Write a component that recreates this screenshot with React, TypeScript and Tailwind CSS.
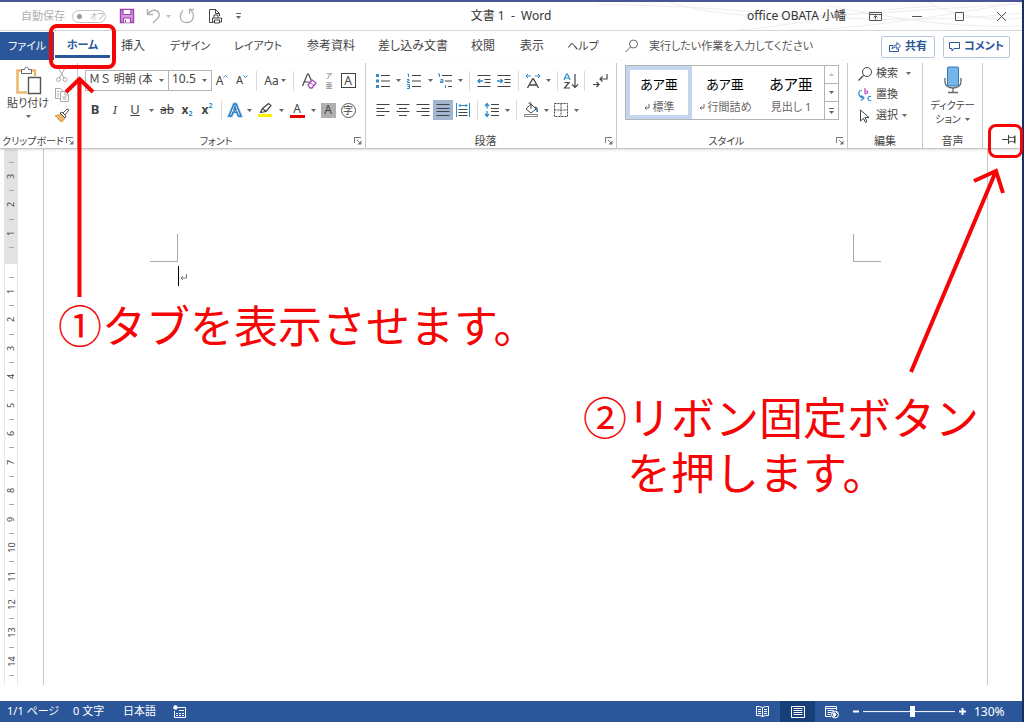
import React, { useState } from 'react';

interface IconProps {
    children: React.ReactNode;
    className?: string;
    size?: number;
}

const Icon: React.FC<IconProps> = ({ children, className = '', size = 16 }) => (
    <svg
        width={size}
        height={size}
        viewBox={`0 0 ${size} ${size}`}
        fill="none"
        stroke="currentColor"
        className={`shrink-0 ${className}`}
        aria-hidden="true"
    >
        {children}
    </svg>
);

const Caret = ({ className = '' }: { className?: string }) => (
    <svg width="5" height="3" viewBox="0 0 5 3" className={`shrink-0 fill-[#666] ${className}`} aria-hidden="true">
        <path d="M0 0h5L2.5 3z" />
    </svg>
);

interface ToolProps {
    label: string;
    width?: string;
    className?: string;
    children: React.ReactNode;
}

const Tool: React.FC<ToolProps> = ({ label, width = 'w-5', className = '', children }) => (
    <button
        type="button"
        aria-label={label}
        className={`flex h-5 shrink-0 items-center justify-center hover:bg-gray-200 ${width} ${className}`}
    >
        {children}
    </button>
);

const Drop = ({ label, width = 'w-[10px]' }: { label: string; width?: string }) => (
    <Tool label={label} width={width}>
        <Caret />
    </Tool>
);

const Sep = () => <span className="mx-1 h-5 w-px shrink-0 bg-[#dcdcdc]" />;

interface GroupProps {
    title: string;
    width: string;
    titleSize?: string;
    launcher?: boolean;
    children: React.ReactNode;
}

const Group: React.FC<GroupProps> = ({ title, width, titleSize = 'text-[11px]', launcher = false, children }) => (
    <section className={`mt-[3px] flex shrink-0 flex-col border-r border-[#c8c8c8] ${width}`}>
        <div className="h-[71px]">{children}</div>
        <div className="flex h-[14px] items-center">
            <h2 className={`flex-1 text-center leading-[14px] whitespace-nowrap ${titleSize}`}>{title}</h2>
            {launcher && (
                <button type="button" aria-label={`${title}の設定`} className="mr-[3px] w-2 text-[#777]">
                    <Icon size={8}>
                        <path d="M.5 6V.5H7M3 3l3 3" />
                        <path d="M7.5 3.5v4h-4z" fill="currentColor" stroke="none" />
                    </Icon>
                </button>
            )}
        </div>
    </section>
);

const tabs = [
    { label: '挿入', width: 'w-11', size: 'text-xs' },
    { label: 'デザイン', width: 'w-[70px]', size: 'text-[11px]' },
    { label: 'レイアウト', width: 'w-[66px]', size: 'text-[11px]' },
    { label: '参考資料', width: 'w-20', size: 'text-xs' },
    { label: '差し込み文書', width: 'w-[84px]', size: 'text-xs' },
    { label: '校閲', width: 'w-14', size: 'text-xs' },
    { label: '表示', width: 'w-[42px]', size: 'text-xs' },
    { label: 'ヘルプ', width: 'w-[60px]', size: 'text-[11px]' },
];

const TitleBar = () => (
    <header className="relative grid h-[31px] grid-cols-[1fr_auto_1fr] items-center overflow-hidden border-t-2 border-b border-t-[#4a5596] border-b-[#d6d6d6]">
        <svg className="absolute top-0 right-0 h-7 w-[424px]" viewBox="0 0 424 28" fill="none" stroke="#eeecf1" aria-hidden="true">
            <path d="M0 3c80 0 120 4 170 8s140 12 254 0M70 0c40 12 90 18 190 12s120-8 164-10M140 28c60-4 110-20 200-24M190 28c60 0 130-10 234-28M230 4c60 10 110 22 194 20M330 0c20 12 60 20 94 16" />
        </svg>
        <div className="flex items-center pl-[21px] text-[#b0b0b0]">
            <span className="w-[51px] text-[11px]">自動保存</span>
            <label className="flex h-[13px] w-[34px] items-center gap-2 rounded-full border border-[#c4c4c4] px-1 text-[8px] whitespace-nowrap">
                <input type="checkbox" aria-label="自動保存" className="size-[5px] shrink-0 appearance-none rounded-full bg-[#9a9a9a]" />
                オフ
            </label>
            <button type="button" aria-label="上書き保存" className="ml-[13px] text-[#9b3fae]">
                <Icon>
                    <path d="M1.5 1.5h13v13h-13z" fill="#d99be0" strokeWidth="1.4" />
                    <path d="M4 1.5h8v5H4zM4.5 14.5V10h7v4.5" fill="#fff" strokeWidth="1.2" />
                    <path d="M6.5 12v2" />
                </Icon>
            </button>
            <button type="button" aria-label="元に戻す" className="ml-[10px]">
                <Icon>
                    <path d="M2.5 1v5.500H8M2.500 6.500C5 3 8 1.500 11 2.500c4 1.500 4 5.500 2 7.500l-5 5" strokeWidth="1.400" />
                </Icon>
            </button>
            <Caret className="ml-[5px] opacity-40" />
            <button type="button" aria-label="やり直し" className="ml-2">
                <Icon>
                    <path d="M10.500 6V1.500H15M10.500 2C16 4 16 14 8 14.500S0 6 4 2.500" strokeWidth="1.300" />
                </Icon>
            </button>
            <button type="button" aria-label="印刷プレビュー" className="ml-[13px] text-[#444]">
                <Icon>
                    <path d="M5 14.500H1.500v-13h6l4 4V8M7.500 1.500v4h4M6 10V7h4v3M4.500 10h9v4h-9z" />
                    <path d="M6.500 12h5v3h-5z" fill="#fff" />
                </Icon>
            </button>
            <button type="button" aria-label="クイック アクセス ツール バーのカスタマイズ" className="ml-3 flex flex-col items-center gap-[2px]">
                <span className="h-px w-[5px] bg-[#666]" />
                <Caret />
            </button>
        </div>
        <h1 className="relative text-xs whitespace-pre text-[#333]">文書 1  -  Word</h1>
        <div className="relative flex items-center justify-end text-[#555]">
            <span className="mr-2 text-xs whitespace-nowrap text-[#333]">office OBATA 小幡</span>
            <button type="button" aria-label="リボンの表示オプション" className="flex w-[42px] justify-center">
                <Icon size={13}>
                    <path d="M.5 2.500h12v8H.5zM.5 4.500h12M6.500 9.500V6M4.500 7.500l2-2 2 2" />
                </Icon>
            </button>
            <button type="button" aria-label="最小化" className="flex w-[42px] justify-center">
                <Icon size={11}><path d="M0 5.500h10" /></Icon>
            </button>
            <button type="button" aria-label="最大化" className="flex w-[42px] justify-center">
                <Icon size={11}><path d="M1.500 1.500h8v8h-8z" /></Icon>
            </button>
            <button type="button" aria-label="閉じる" className="flex w-[42px] justify-center">
                <Icon size={11}><path d="m1 1 9 9M10 1l-9 9" /></Icon>
            </button>
        </div>
    </header>
);

const TabBar = () => (
    <nav className="flex h-[29px] items-stretch pt-px">
        <button type="button" className="w-[54px] shrink-0 bg-[#2b579a] text-[11px] text-white">ファイル</button>
        <button type="button" className="flex w-[57px] shrink-0 flex-col items-center pt-1 text-[11px] font-bold text-[#2b579a]">
            <span className="flex flex-1 items-center">ホーム</span>
            <span className="mb-[2px] h-[3px] w-[55px] bg-[#2b579a]" />
        </button>
        {tabs.map((tab) => (
            <button key={tab.label} type="button" className={`shrink-0 whitespace-nowrap ${tab.width} ${tab.size}`}>
                {tab.label}
            </button>
        ))}
        <label className="flex flex-1 items-center gap-[10px] pl-3">
            <Icon size={14} className="text-[#666]">
                <circle cx="8.500" cy="5" r="4" />
                <path d="m5.500 8-5 5" />
            </Icon>
            <input
                type="text"
                placeholder="実行したい作業を入力してください"
                className="w-full min-w-0 text-[11px] outline-none placeholder:text-[#555]"
            />
        </label>
        <div className="mr-3 flex items-center gap-2 pt-px text-[11px] font-bold text-[#2b579a]">
            <button type="button" className="flex h-[22px] w-[54px] items-center justify-center gap-1 rounded-xs border border-[#b9c7de] bg-white">
                <Icon size={12}>
                    <path d="M4 4.500H.5v6h9V8M3 8c.5-3 2-4 5-4V1.500L11.500 5 8 8.500V6C6 6 4.500 6.500 3 8z" />
                </Icon>
                共有
            </button>
            <button type="button" className="flex h-[22px] w-[67px] items-center justify-center gap-1 rounded-xs border border-[#b9c7de] bg-white">
                <Icon size={11}>
                    <path d="M.5 1.500h10v6H5l-2 2.500V7.500H.5z" />
                </Icon>
                コメント
            </button>
        </div>
    </nav>
);

const ClipboardGroup = () => (
    <Group title="クリップボード" titleSize="text-[10px]" width="w-[78px]" launcher>
        <div className="flex">
            <button type="button" className="ml-1 flex w-12 flex-col items-center pt-[3px] text-[11px] leading-4">
                <svg width="28" height="29" viewBox="0 0 28 29" fill="none" aria-hidden="true">
                    <path d="M13 26.500H3.500v-22h4M17 4.500h4V10" stroke="#eab96c" strokeWidth="2.500" />
                    <path d="M7.500 7.500v-4h3c0-3 4-3 4 0h3v4z" fill="#fff" stroke="#666" />
                    <path d="M14.500 11.500h12v16h-12z" fill="#fff" stroke="#555" strokeWidth="1.400" />
                </svg>
                <span>貼り付け</span>
                <Caret className="mt-1" />
            </button>
            <div className="flex flex-col pt-[2px] text-[#a9a9a9]">
                <Tool label="切り取り">
                    <Icon>
                        <path d="M4.500 1 10 11M11 1 5.500 11" />
                        <circle cx="4.500" cy="12.500" r="2" />
                        <circle cx="11" cy="12.500" r="2" />
                    </Icon>
                </Tool>
                <Tool label="コピー">
                    <Icon>
                        <path d="M6 11.500H1.500v-10h5l2 2V5M3 4.500h2M3 7h2M3 9h2" />
                        <path d="M6.500 4.500h5l3 3v7h-8zM11 5v3h3M8.500 10h4M8.500 12h4" />
                    </Icon>
                </Tool>
                <Tool label="書式のコピー/貼り付け">
                    <Icon>
                        <path d="m1 9 6-2 4 4-3 4-2-1-1-1-1-1-1-2z" fill="#f0b66b" stroke="#dc9b49" />
                        <path d="m6 6 5 5 1-2-4-4z" fill="#fff" stroke="#555" />
                        <path d="m9 6 4-4 2 1-4 5" stroke="#555" />
                    </Icon>
                </Tool>
            </div>
        </div>
    </Group>
);

const FontGroup = () => (
    <Group title="フォント" titleSize="text-[10px]" width="w-72" launcher>
        <div className="flex flex-col gap-[9px] pt-[7px] pl-[7px]">
            <div className="flex items-center">
                <div className="relative h-[21px] w-[84px] border border-[#b4b4b4]">
                    <select
                        aria-label="フォント"
                        className="block h-[19px] w-full appearance-none py-0 pr-4 pb-1 pl-[3px] text-[11px] leading-[15px] [font-feature-settings:normal]"
                    >
                        <option>ＭＳ 明朝 (本</option>
                    </select>
                    <Caret className="absolute top-2 right-1" />
                </div>
                <div className="relative -ml-px h-[21px] w-11 border border-[#b4b4b4]">
                    <select
                        aria-label="フォント サイズ"
                        className="block h-[19px] w-full appearance-none py-0 pb-1 pl-[3px] text-xs leading-[15px]"
                    >
                        <option>10.5</option>
                    </select>
                    <Caret className="absolute top-2 right-1" />
                </div>
                <Tool label="フォント サイズの拡大">
                    <span className="text-xs">A</span>
                    <Icon size={5} className="-mt-2 text-[#2f8ac9]"><path d="m.5 3.500 2-2 2 2" /></Icon>
                </Tool>
                <Tool label="フォント サイズの縮小">
                    <span className="text-[11px]">A</span>
                    <Icon size={5} className="-mt-2 text-[#2f8ac9]"><path d="m.5 1.500 2 2 2-2" /></Icon>
                </Tool>
                <Sep />
                <Tool label="文字種の変換" width="w-7" className="gap-[2px] text-xs">
                    Aa
                    <Caret />
                </Tool>
                <Sep />
                <Tool label="書式のクリア" width="w-[22px]">
                    <Icon>
                        <path d="m1.500 13 5-12h1l4 9M3.500 9h5" strokeWidth="1.200" />
                        <path d="m7 12 4-5 4 3-4 5H9z" fill="#fff" stroke="#a349b5" strokeWidth="1.300" />
                        <path d="m9 9.500 4 3" stroke="#a349b5" />
                    </Icon>
                </Tool>
                <Tool label="ルビ" width="w-[18px]">
                    <span className="flex flex-col items-center text-[7px] leading-[10px] text-[#777]">
                        <span>ア</span>
                        <span>亜</span>
                    </span>
                </Tool>
                <Tool label="囲み線">
                    <span className="flex size-[15px] items-center justify-center border border-[#444] text-xs">A</span>
                </Tool>
            </div>
            <div className="flex items-center">
                <Tool label="太字" className="text-[13px] font-bold">B</Tool>
                <Tool label="斜体" className="font-serif text-[13px] italic">I</Tool>
                <Tool label="下線" className="text-[13px] underline">U</Tool>
                <Drop label="下線の種類" width="w-3" />
                <Tool label="取り消し線" className="text-xs line-through">ab</Tool>
                <Tool label="下付き" className="text-xs font-bold">
                    x<span className="mt-2 text-[7px] text-[#2f8ac9]">2</span>
                </Tool>
                <Tool label="上付き" className="text-xs font-bold">
                    x<span className="mb-2 text-[7px] text-[#2f8ac9]">2</span>
                </Tool>
                <Sep />
                <Tool label="文字の効果と体裁" width="w-[18px]">
                    <Icon>
                        <path d="M2 14 7 2h2l5 12h-2.500l-1.500-4H6l-1.500 4z" fill="#fff" stroke="#a7d0f0" strokeWidth="3" />
                        <path d="M2 14 7 2h2l5 12h-2.500l-1.500-4H6l-1.500 4zM7 8h2L8 4.500z" fill="#fff" stroke="#2878bd" strokeWidth="1.400" />
                    </Icon>
                </Tool>
                <Drop label="文字の効果" />
                <Tool label="蛍光ペンの色" width="w-[22px]">
                    <Icon>
                        <path d="m3.500 10.500 2-4 6-5 2.500 2-5 6zM5.500 6.500l3.500 3" strokeWidth="1.200" />
                        <path d="M1 12h14v3H1z" fill="#ffef00" stroke="none" />
                    </Icon>
                </Tool>
                <Drop label="蛍光ペン" />
                <Tool label="フォントの色" width="w-[22px]">
                    <span className="flex h-4 w-[15px] items-center justify-center border-b-3 border-[#e60000] text-xs">A</span>
                </Tool>
                <Drop label="フォントの色の選択" />
                <Tool label="文字の網かけ">
                    <span className="flex size-[15px] items-center justify-center bg-[#b0b0b0] text-xs">A</span>
                </Tool>
                <Tool label="囲い文字">
                    <span className="flex size-[15px] items-center justify-center rounded-full border border-[#555] text-[10px]">字</span>
                </Tool>
            </div>
        </div>
    </Group>
);

const ParagraphGroup = () => (
    <Group title="段落" width="w-[251px]" launcher>
        <div className="flex flex-col gap-[9px] pt-[7px] pl-[7px]">
            <div className="flex h-[21px] items-center">
                <Tool label="箇条書き">
                    <Icon>
                        <path d="M6 2.500h9M6 8h9M6 13.500h9" />
                        <path d="M1 1h3v3H1zM1 6.500h3v3H1zM1 12h3v3H1z" fill="#2f8ac9" stroke="none" />
                    </Icon>
                </Tool>
                <Drop label="箇条書きの種類" />
                <Tool label="段落番号" width="w-[22px]">
                    <Icon>
                        <path d="M6 2.500h9M6 8h9M6 13.500h9" />
                        <path d="M1.500 1h1v3M1 6.500h2v1.500H1.500v1.500H4M1 11.500h2.500v4H1M1.500 13.500h2" stroke="#2f8ac9" />
                    </Icon>
                </Tool>
                <Drop label="段落番号の種類" />
                <Tool label="アウトライン">
                    <Icon>
                        <path d="M5 2.500h10M8 8h7M11 13.500h4" />
                        <path d="M1 1h1.500v3M3.500 6.500h2.500v3H3.500V8H6M8.500 12v3" stroke="#2f8ac9" />
                    </Icon>
                </Tool>
                <Drop label="アウトラインの種類" />
                <Sep />
                <Tool label="インデントを減らす">
                    <Icon>
                        <path d="M1.500 2.500h13M8.500 6.500h6M8.500 9.500h6M1.500 13.500h13" />
                        <path d="M7 8H2M4 6 2 8l2 2" stroke="#2f8ac9" strokeWidth="1.300" />
                    </Icon>
                </Tool>
                <Tool label="インデントを増やす">
                    <Icon>
                        <path d="M1.500 2.500h13M8.500 6.500h6M8.500 9.500h6M1.500 13.500h13" />
                        <path d="M1 8h5.500M4.500 6l2 2-2 2" stroke="#2f8ac9" strokeWidth="1.300" />
                    </Icon>
                </Tool>
                <Sep />
                <Tool label="拡張書式">
                    <Icon>
                        <path d="m2.500 15 5-9h1l5 9M4.500 12h7" strokeWidth="1.300" />
                        <path d="M6 3H1M3 1 1 3l2 2M10 3h5M13 1l2 2-2 2" stroke="#2f8ac9" />
                    </Icon>
                </Tool>
                <Drop label="拡張書式の種類" />
                <Sep />
                <Tool label="並べ替え" width="w-[18px]">
                    <Icon>
                        <path d="M1 7 3.500 1h1L7 7M2 5h4" stroke="#2f8ac9" strokeWidth="1.200" />
                        <path d="M1.500 9.500H6L1.500 15H7M12 1v13.500M9 11.500l3 3 3-3" strokeWidth="1.200" />
                    </Icon>
                </Tool>
                <Sep />
                <Tool label="編集記号の表示/非表示" width="w-[22px]">
                    <Icon>
                        <path d="M15 1v5H8M10.500 3.500 8 6l2.500 2.500M1 11.500h6M4.500 9 7 11.500 4.500 14" strokeWidth="1.200" />
                    </Icon>
                </Tool>
            </div>
            <div className="flex items-center">
                <Tool label="左揃え">
                    <Icon><path d="M1.500 2.500h13M1.500 6.500h8M1.500 9.500h13M1.500 13.500h8" /></Icon>
                </Tool>
                <Tool label="中央揃え">
                    <Icon><path d="M1.500 2.500h13M4 6.500h8M1.500 9.500h13M4 13.500h8" /></Icon>
                </Tool>
                <Tool label="右揃え">
                    <Icon><path d="M1.500 2.500h13M6.500 6.500h8M1.500 9.500h13M6.500 13.500h8" /></Icon>
                </Tool>
                <Tool label="両端揃え" className="bg-[#a3b5d0]">
                    <Icon><path d="M1.500 2.500h13M1.500 6.500h13M1.500 9.500h13M1.500 13.500h13" /></Icon>
                </Tool>
                <Tool label="均等割り付け">
                    <Icon>
                        <path d="M3.500 7.500h9M3.500 10.500h9M3.500 13.500h9" />
                        <path d="M1.500 1v14M14.500 1v14M4 3.500h8M5.500 2 4 3.500 5.500 5M10.500 2 12 3.500 10.500 5" stroke="#2f8ac9" />
                    </Icon>
                </Tool>
                <Sep />
                <Tool label="行と段落の間隔">
                    <Icon>
                        <path d="M7 2.500h8M7 6.500h8M7 9.500h8M7 13.500h8" />
                        <path d="M3 1.500v5M1 4l2-2.500L5 4M3 9v5.500M1 12l2 2.500L5 12" stroke="#2f8ac9" strokeWidth="1.300" />
                    </Icon>
                </Tool>
                <Drop label="間隔の種類" />
                <Sep />
                <Tool label="塗りつぶし">
                    <Icon>
                        <path d="m3 7 5-5 5 5-5 4zM8 7V1.500C8 0 6 0 6 2" />
                        <path d="M12 5c2 1 2.500 3 2 5" stroke="#2f6fa9" strokeWidth="1.600" />
                        <path d="M1.500 12.500h13v2h-13z" fill="#fff" stroke="#888" />
                    </Icon>
                </Tool>
                <Drop label="塗りつぶしの色" />
                <Tool label="罫線">
                    <Icon>
                        <path d="M1.500 1.500h13v13h-13zM8 1.500v13M1.500 8h13" strokeDasharray="2 1" />
                    </Icon>
                </Tool>
                <Drop label="罫線の種類" />
            </div>
        </div>
    </Group>
);

const styleCells = [
    { name: '標準', mark: true, sample: 'text-[13px]', active: true },
    { name: '行間詰め', mark: true, sample: 'text-[13px]', active: false },
    { name: '見出し 1', mark: false, sample: 'text-[15px]', active: false },
];

const StylesGroup = () => (
    <Group title="スタイル" titleSize="text-[10px]" width="w-[231px]" launcher>
        <div className="pt-[2px] pl-2">
            <div className="flex h-[55px] w-[214px] border border-[#b4b4b4]">
                {styleCells.map((cell) => (
                    <button
                        key={cell.name}
                        type="button"
                        className={`flex flex-1 flex-col items-center justify-between border-4 pt-1 ${cell.active ? 'border-[#c5d5ee]' : 'border-transparent'}`}
                    >
                        <span className={`leading-5 text-black ${cell.sample}`}>あア亜</span>
                        <span className="flex items-center gap-[3px] text-[11px] leading-4 whitespace-nowrap text-[#666]">
                            {cell.mark && (
                                <Icon size={6}><path d="M5 0v4H1M2.500 2.500 1 4l1.500 1.500" /></Icon>
                            )}
                            {cell.name}
                        </span>
                    </button>
                ))}
                <div className="flex w-[14px] flex-col divide-y divide-[#b4b4b4] border-l border-[#b4b4b4]">
                    <button type="button" aria-label="前のスタイル" className="flex flex-1 items-center justify-center">
                        <Caret className="rotate-180 opacity-40" />
                    </button>
                    <button type="button" aria-label="次のスタイル" className="flex flex-1 items-center justify-center">
                        <Caret />
                    </button>
                    <button type="button" aria-label="その他のスタイル" className="flex flex-1 flex-col items-center justify-center gap-[2px]">
                        <span className="h-px w-[5px] bg-[#666]" />
                        <Caret />
                    </button>
                </div>
            </div>
        </div>
    </Group>
);

const EditGroup = () => (
    <Group title="編集" width="w-[75px]">
        <div className="flex flex-col pl-[10px] text-[11px]">
            <button type="button" className="flex h-[21px] items-center gap-1">
                <Icon size={14}>
                    <circle cx="9" cy="5" r="4.500" />
                    <path d="m5.500 8.500-5 5" strokeWidth="1.300" />
                </Icon>
                検索
                <Caret className="ml-1" />
            </button>
            <button type="button" className="flex h-[21px] items-center gap-1">
                <Icon size={14}>
                    <path d="M7 0v6M7 3.500c3-2 4 2.500 0 2.500" stroke="#b14fc0" strokeWidth="1.200" />
                    <path d="M13 8.500c-4-1-4 5 0 4M4 2C-1 3 0 9 6 10M3.500 7.500 6 10l-3 2.500" stroke="#2f8ac9" strokeWidth="1.200" />
                </Icon>
                置換
            </button>
            <button type="button" className="flex h-[21px] items-center gap-1">
                <Icon size={14}>
                    <path d="M2.500 1v11l3-2.500 2 4 1.500-1-2-4h4z" />
                </Icon>
                選択
                <Caret />
            </button>
        </div>
    </Group>
);

const VoiceGroup = () => (
    <Group title="音声" width="w-[60px]">
        <button type="button" className="flex w-full flex-col items-center pt-[3px] text-[10px] leading-[14px]">
            <svg width="18" height="28" viewBox="0 0 18 28" fill="none" aria-hidden="true">
                <path d="M1 12v4c0 8 16 8 16 0v-4M9 22v4M4 26.500h10" stroke="#666" strokeWidth="1.300" />
                <rect x="3.500" y="1" width="11" height="19" rx="1" fill="#76b5e8" stroke="#3477b5" />
            </svg>
            <span className="mt-1">ディクテー</span>
            <span className="flex items-center gap-1">
                ション
                <Caret />
            </span>
        </button>
    </Group>
);

const Ribbon = () => (
    <div className="relative z-10 flex h-[89px] border-b border-[#c6c6c6] bg-white shadow-sm">
        <ClipboardGroup />
        <FontGroup />
        <ParagraphGroup />
        <StylesGroup />
        <EditGroup />
        <VoiceGroup />
        <div className="flex flex-1 items-end justify-end pr-[5px]">
            <button type="button" aria-label="リボンの固定" className="block">
                <Icon className="block">
                    <path d="M1 7.500h6M7.500 3v9M7.500 4.500c2 1.500 4 1.500 6 0v6c-2-1.500-4-1.500-6 0M14 3.500v8" />
                </Icon>
            </button>
        </div>
    </div>
);

// null entries are the half-unit ticks
const upperMarks = [null, 3, null, 2, null, 1, null];
const lowerMarks = Array.from({ length: 29 }, (_, i) => (i % 2 ? (i + 1) / 2 : null));

const RulerMarks = ({ marks }: { marks: (number | null)[] }) => (
    <>
        {marks.map((mark, i) => (
            <span key={i} className="flex min-h-0 flex-1 items-center justify-center">
                {mark === null ? <i className="h-px w-[5px] bg-[#aaa]" /> : <b className="-rotate-90 text-[9px] leading-none font-normal">{mark}</b>}
            </span>
        ))}
    </>
);

const Document = () => (
    <main className="flex flex-1 bg-white pb-4 pl-1">
        <div className="flex w-[14px] flex-col border-x border-[#e6e6e6]">
            <div className="flex h-[115px] flex-col bg-[#e3e3e3] pt-[6px] pb-[9px]">
                <RulerMarks marks={upperMarks} />
            </div>
            <div className="flex flex-1 flex-col pt-[6px] pb-[2px]">
                <RulerMarks marks={lowerMarks} />
            </div>
        </div>
        <div className="mr-[34px] ml-[25px] flex-1 border-x border-[#c8c8c8] pt-[85px]">
            <div className="flex justify-between px-[106px]">
                <span className="size-7 border-r border-b border-[#aaa]" />
                <span className="size-7 border-b border-l border-[#aaa]" />
            </div>
            <p className="mt-1 flex items-center pl-[134px]">
                <span className="h-5 w-px bg-black" />
                <Icon size={8} className="mt-1 ml-px text-[#777]">
                    <path d="M6.500 0v4H1M3 2 1 4l2 2" />
                </Icon>
            </p>
        </div>
    </main>
);

const StatusBar = () => {
    const [zoom, setZoom] = useState(130);

    return (
        <footer className="flex h-[21px] items-center bg-[#2b579a] text-[11px] text-white">
            <span className="w-[66px] pl-[7px] whitespace-nowrap">1/1 ページ</span>
            <span className="ml-[7px] w-[50px]">0 文字</span>
            <button type="button" className="w-[50px] text-left">日本語</button>
            <button type="button" aria-label="マクロの記録">
                <Icon size={13}>
                    <path d="M5 2.500h7.500v10h-11V6" />
                    <path d="M3 8.500h2M6 8.500h2M9 8.500h2M3 10.500h2M6 10.500h2M9 10.500h2M6 5.500h5" />
                    <circle cx="2.500" cy="2.500" r="2.200" fill="#fff" stroke="none" />
                </Icon>
            </button>
            <div className="ml-auto flex h-full items-center">
                <button type="button" aria-label="閲覧モード" className="flex h-full w-9 items-center justify-center">
                    <Icon size={13}>
                        <path d="M6.500 2.500c-2-1-4-1-6-1v9c2 0 4 0 6 1 2-1 4-1 6-1v-9c-2 0-4 0-6 1v9M2 4.500h3M2 6.500h3M2 8.500h3M8 4.500h3M8 6.500h3M8 8.500h3" />
                    </Icon>
                </button>
                <button type="button" aria-label="印刷レイアウト" className="flex h-full w-[35px] items-center justify-center bg-[#153f78]">
                    <Icon size={14}>
                        <path d="M.5 1.500h13v11H.5zM2.500 3.500h9M2.500 5.500h9M2.500 7.500h9M2.500 9.500h9" />
                    </Icon>
                </button>
                <button type="button" aria-label="Web レイアウト" className="flex h-full w-[34px] items-center justify-center">
                    <Icon size={14}>
                        <path d="M6 11.500H.5v-10h11V5M.5 3.500h11M2.500 5.500h6M2.500 7.500h4M2.500 9.500h3" />
                        <circle cx="10" cy="9.500" r="3.500" />
                        <path d="M8 8h2l1 2-2 2zM11 7l2 2" fill="currentColor" />
                    </Icon>
                </button>
                <button type="button" aria-label="縮小" className="flex w-[14px] justify-center">
                    <Icon size={7}><path d="M0 3.500h6" strokeWidth="2" /></Icon>
                </button>
                <input
                    type="range"
                    aria-label="ズーム"
                    min={10}
                    max={230}
                    value={zoom}
                    onChange={(e) => setZoom(Number(e.target.value))}
                    className="h-3 w-[92px] appearance-none bg-linear-to-b from-transparent from-[45%] via-white via-[45%] to-transparent to-[55%] [&::-webkit-slider-thumb]:h-[11px] [&::-webkit-slider-thumb]:w-[5px] [&::-webkit-slider-thumb]:appearance-none [&::-webkit-slider-thumb]:bg-white"
                />
                <button type="button" aria-label="拡大" className="flex w-[14px] justify-center">
                    <Icon size={7}><path d="M0 3.500h7M3.500 0v7" strokeWidth="2" /></Icon>
                </button>
                <span className="w-[53px] pl-[5px] text-xs">{zoom}%</span>
            </div>
        </footer>
    );
};

const Annotations = () => (
    <div className="pointer-events-none absolute inset-0 z-20 text-[44px] leading-[55px] whitespace-nowrap text-[#f50505]">
        <div className="absolute top-6 left-[49px] h-[45px] w-[67px] rounded-lg border-4" />
        <div className="absolute top-[124px] -right-px h-[34px] w-[35px] rounded-lg border-3" />
        <svg className="absolute top-[74px] left-[64px]" width="32" height="224" viewBox="0 0 32 224" fill="none" stroke="currentColor" strokeWidth="4" aria-hidden="true">
            <path d="M15.500 223V5M2 18 15.500 5 29 18" />
        </svg>
        <svg className="absolute top-[164px] right-3" width="104" height="210" viewBox="0 0 104 210" fill="none" stroke="currentColor" strokeWidth="4" aria-hidden="true">
            <path d="M5 208 90 7M68 17 90 7l7 22" />
        </svg>
        <p className="absolute top-[299px] left-[58px]">①タブを表示させます。</p>
        <p className="absolute top-[391px] right-[43px]">
            ②リボン固定ボタン
            <br />
            <span className="pl-[44px]">を押します。</span>
        </p>
    </div>
);

const App: React.FC = () => (
    <div className="relative flex min-h-screen flex-col border-r-2 border-[#17325f] bg-white font-['Noto_Sans','Noto_Sans_CJK_JP',sans-serif] text-[#444]">
        <div className="[font-feature-settings:'palt']">
            <TitleBar />
            <TabBar />
            <Ribbon />
        </div>
        <Document />
        <div className="[font-feature-settings:'palt']">
            <StatusBar />
        </div>
        <Annotations />
    </div>
);

export default App;
